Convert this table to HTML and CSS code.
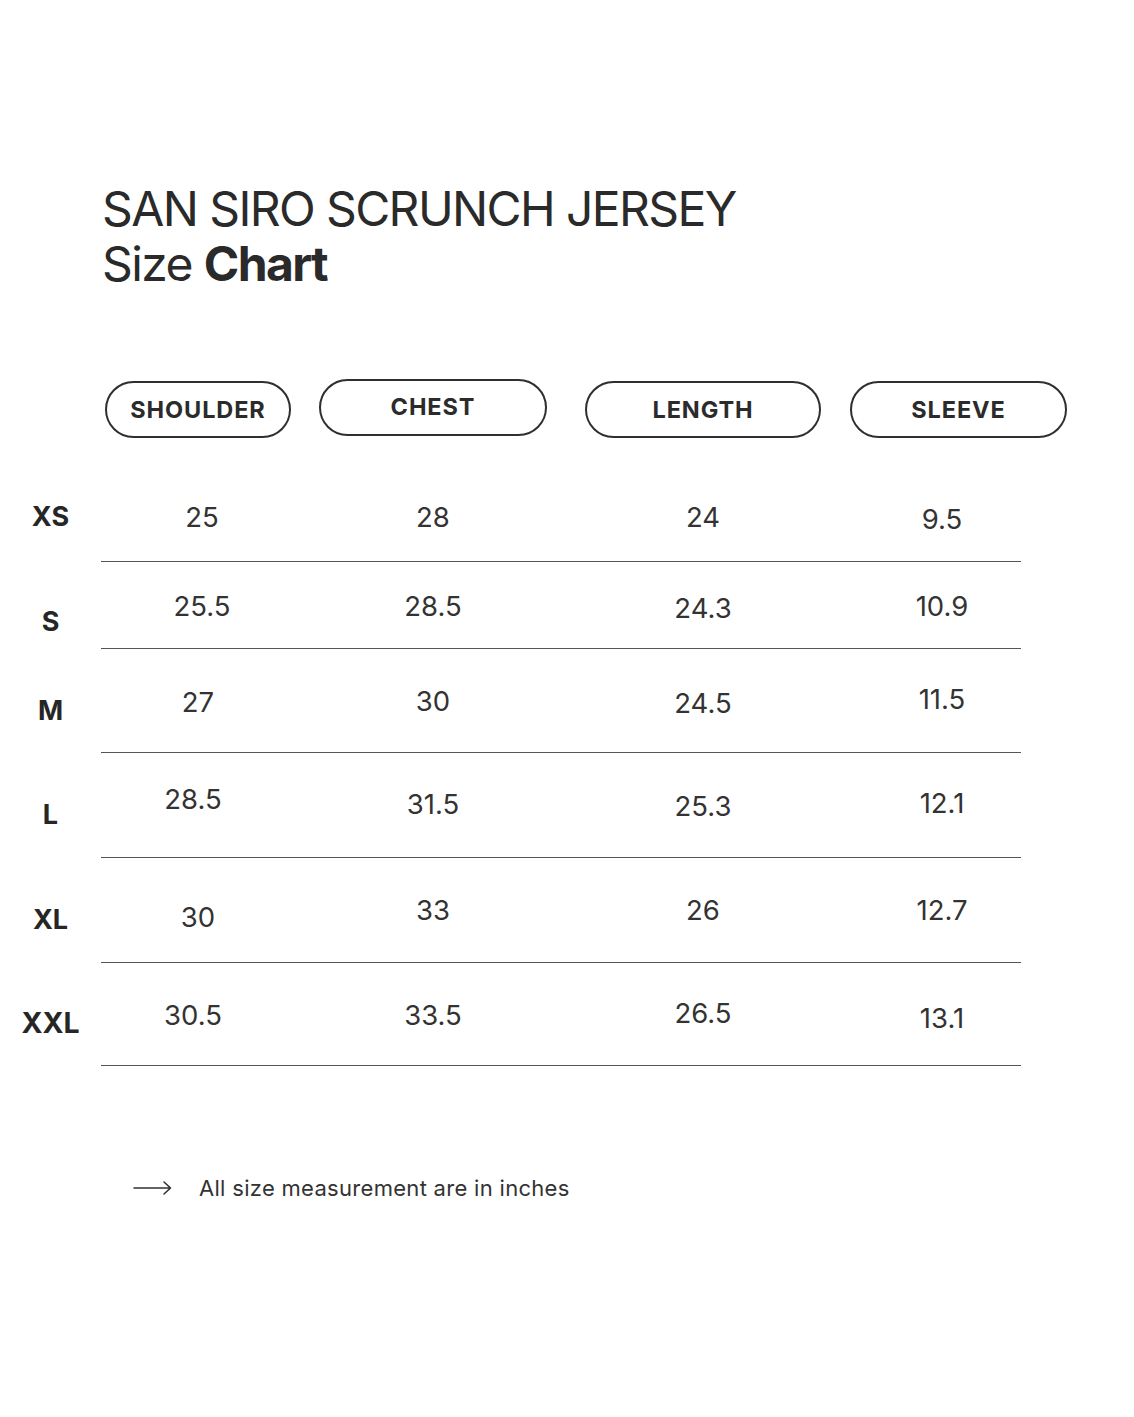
FILE: index.html
```html
<!DOCTYPE html>
<html>
<head>
<meta charset="utf-8">
<link rel="stylesheet" href="styles.css">
</head>
<body>
<div class="page">
  <h1 class="title">SAN SIRO SCRUNCH JERSEY<br>Size <b>Chart</b></h1>

  <div class="heads">
    <div class="pill p-shoulder">SHOULDER</div>
    <div class="pill p-chest">CHEST</div>
    <div class="pill p-length">LENGTH</div>
    <div class="pill p-sleeve">SLEEVE</div>
  </div>

  <div class="table">
    <div class="row r-xs">
      <div class="label t32">XS</div>
      <div class="cells">
        <div class="c c1 t32">25</div>
        <div class="c c2 t32">28</div>
        <div class="c c3 t32">24</div>
        <div class="c c4 t34">9.5</div>
      </div>
    </div>
    <div class="row r-s">
      <div class="label t45">S</div>
      <div class="cells">
        <div class="c c1 t29">25.5</div>
        <div class="c c2 t29">28.5</div>
        <div class="c c3 t31">24.3</div>
        <div class="c c4 t29">10.9</div>
      </div>
    </div>
    <div class="row r-m">
      <div class="label t47">M</div>
      <div class="cells">
        <div class="c c1 t38 l4">27</div>
        <div class="c c2 t37">30</div>
        <div class="c c3 t39">24.5</div>
        <div class="c c4 t35">11.5</div>
      </div>
    </div>
    <div class="row r-l">
      <div class="label t47">L</div>
      <div class="cells">
        <div class="c c1 t31 l9">28.5</div>
        <div class="c c2 t36">31.5</div>
        <div class="c c3 t38">25.3</div>
        <div class="c c4 t35">12.1</div>
      </div>
    </div>
    <div class="row r-xl">
      <div class="label t47">XL</div>
      <div class="cells">
        <div class="c c1 t44 l4">30</div>
        <div class="c c2 t37">33</div>
        <div class="c c3 t37">26</div>
        <div class="c c4 t37">12.7</div>
      </div>
    </div>
    <div class="row r-xxl">
      <div class="label label-wide t45">XXL</div>
      <div class="cells">
        <div class="c c1 t37 l9">30.5</div>
        <div class="c c2 t37">33.5</div>
        <div class="c c3 t35">26.5</div>
        <div class="c c4 t40">13.1</div>
      </div>
    </div>
  </div>

  <div class="note">
    <svg class="arrow" width="40" height="16" viewBox="0 0 40 16">
      <path d="M1 8 H37 M31 2 L37.5 8 L31 14" fill="none" stroke="#333" stroke-width="1.6" stroke-linecap="round" stroke-linejoin="round"/>
    </svg>
    <span>All size measurement are in inches</span>
  </div>
</div>
</body>
</html>
```
FILE: styles.css
```css
html, body {
  margin: 0;
  padding: 0;
  background: #fff;
}
body {
  font-family: Inter, "Noto Sans", "Liberation Sans", sans-serif;
  color: #2b2b2b;
}
.page {
  width: 1134px;
  height: 1417px;
  padding-top: 181px;
  box-sizing: border-box;
}
.title {
  margin: 0 0 0 102px;
  font-size: 48px;
  font-weight: 400;
  line-height: 55px;
  letter-spacing: -1.6px;
  color: #2a2a2a;
}
.title b {
  font-weight: 700;
}
.heads {
  display: flex;
  align-items: flex-start;
  margin-top: 88px;
  height: 91px;
}
.pill {
  box-sizing: border-box;
  height: 57px;
  border: 2px solid #2f2f2f;
  border-radius: 29px;
  display: flex;
  align-items: center;
  justify-content: center;
  font-size: 23.5px;
  font-weight: 700;
  color: #2b2b2b;
  letter-spacing: 0.9px;
}
.p-shoulder { margin-left: 105px; width: 186px; margin-top: 2px; }
.p-chest { margin-left: 28px; width: 228px; align-items: flex-start; padding-top: 11px; }
.p-length { margin-left: 38px; width: 236px; margin-top: 2px; }
.p-sleeve { margin-left: 29px; width: 217px; margin-top: 2px; }

.table {
  display: flex;
  flex-direction: column;
}
.row {
  display: flex;
}
.r-xs { height: 92px; }
.r-s { height: 87px; }
.r-m { height: 104px; }
.r-l { height: 105px; }
.r-xl { height: 105px; }
.r-xxl { height: 103px; }
.label {
  width: 101px;
  flex: none;
  text-align: center;
  font-size: 27px;
  font-weight: 700;
  line-height: 30px;
  color: #262626;
}
.label-wide {
  font-size: 28.5px;
}
.cells {
  width: 920px;
  flex: none;
  display: flex;
  border-bottom: 1.5px solid #555;
  box-sizing: border-box;
}
.c {
  text-align: center;
  font-size: 27.5px;
  font-weight: 400;
  line-height: 30px;
  color: #333;
}
.c1 { width: 202px; }
.c2 { width: 260px; }
.c3 { width: 280px; }
.c4 { width: 178px; padding-left: 20px; box-sizing: border-box; }
.l4 { padding-right: 8px; box-sizing: border-box; }
.l9 { padding-right: 18px; box-sizing: border-box; }

.t29 { padding-top: 29px; }
.t31 { padding-top: 31px; }
.t32 { padding-top: 32px; }
.t34 { padding-top: 34px; }
.t35 { padding-top: 35px; }
.t36 { padding-top: 36px; }
.t37 { padding-top: 37px; }
.t38 { padding-top: 38px; }
.t39 { padding-top: 39px; }
.t40 { padding-top: 40px; }
.t44 { padding-top: 44px; }
.t45 { padding-top: 45px; }
.t47 { padding-top: 47px; }

.note {
  display: flex;
  align-items: center;
  margin-top: 110px;
  margin-left: 133px;
  height: 24px;
}
.arrow {
  flex: none;
}
.note span {
  margin-left: 26px;
  font-size: 22px;
  letter-spacing: 0.3px;
  color: #333;
}
```
